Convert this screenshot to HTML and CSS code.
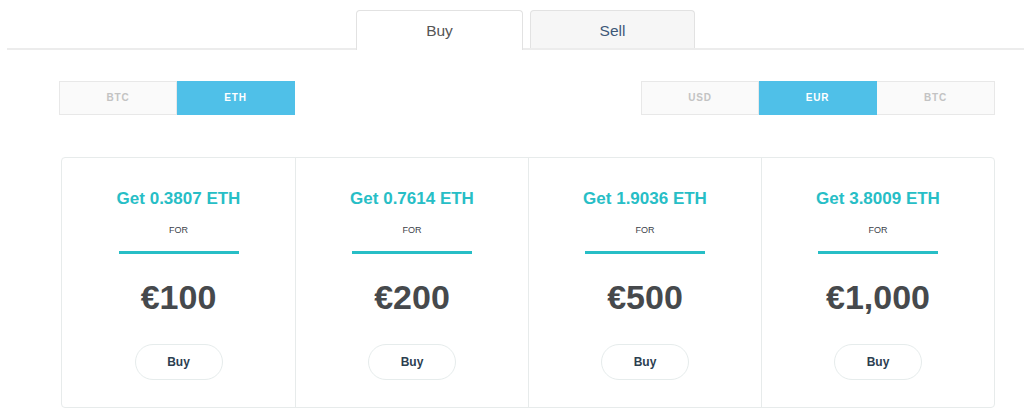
FILE: index.html
```html
<!DOCTYPE html>
<html>
<head>
<meta charset="utf-8">
<link rel="stylesheet" href="styles.css">
</head>
<body>
<div class="tabs">
  <div class="tab tab-active">Buy</div>
  <div class="tab tab-idle">Sell</div>
</div>
<div class="main">
  <div class="toggles">
    <div class="seg-group seg-left">
      <div class="seg">BTC</div>
      <div class="seg seg-on">ETH</div>
    </div>
    <div class="seg-group">
      <div class="seg">USD</div>
      <div class="seg seg-on">EUR</div>
      <div class="seg">BTC</div>
    </div>
  </div>
  <div class="cards">
    <div class="card">
      <div class="get">Get 0.3807 ETH</div>
      <div class="for">FOR</div>
      <div class="rule"></div>
      <div class="price">€100</div>
      <div class="btn">Buy</div>
    </div>
    <div class="card">
      <div class="get">Get 0.7614 ETH</div>
      <div class="for">FOR</div>
      <div class="rule"></div>
      <div class="price">€200</div>
      <div class="btn">Buy</div>
    </div>
    <div class="card">
      <div class="get">Get 1.9036 ETH</div>
      <div class="for">FOR</div>
      <div class="rule"></div>
      <div class="price">€500</div>
      <div class="btn">Buy</div>
    </div>
    <div class="card">
      <div class="get">Get 3.8009 ETH</div>
      <div class="for">FOR</div>
      <div class="rule"></div>
      <div class="price">€1,000</div>
      <div class="btn">Buy</div>
    </div>
  </div>
</div>
</body>
</html>
```

FILE: styles.css
```css
html, body {
  margin: 0;
  padding: 0;
  background: #ffffff;
  font-family: "Liberation Sans", Arial, sans-serif;
}

.tabs {
  display: flex;
  margin-left: 7px;
  padding-top: 10px;
  padding-left: 349px;
  gap: 7px;
  border-bottom: 2px solid #ececec;
  height: 38px;
}

.tab {
  box-sizing: border-box;
  height: 38px;
  line-height: 36px;
  padding-top: 2px;
  text-align: center;
  font-size: 15.5px;
  border: 1px solid #e2e2e2;
  border-bottom: none;
  border-radius: 4px 4px 0 0;
}

.tab-active {
  width: 167px;
  background: #ffffff;
  color: #555555;
  height: 40px;
  margin-bottom: -2px;
}

.tab-idle {
  width: 165px;
  background: #f6f6f6;
  color: #3e5878;
}

.main {
  padding: 31px 29px 0 59px;
}

.toggles {
  display: flex;
  justify-content: space-between;
}

.seg-group {
  display: flex;
}

.seg {
  box-sizing: border-box;
  width: 118px;
  height: 34px;
  line-height: 32px;
  text-align: center;
  font-size: 10px;
  font-weight: bold;
  letter-spacing: 0.8px;
  color: #c3c3c3;
  background: #fafafa;
  border: 1px solid #e8e8e8;
}

.seg + .seg {
  border-left: none;
}

.seg-on {
  background: #4fc0e8;
  border-color: #4fc0e8;
  color: #ffffff;
}

.cards {
  margin: 42px 0 0 2px;
  display: grid;
  grid-template-columns: repeat(4, 1fr);
  border: 1px solid #e7ebeb;
  border-radius: 4px;
}

.card {
  display: flex;
  flex-direction: column;
  align-items: center;
  padding: 31px 0 27px;
}

.card + .card {
  border-left: 1px solid #e7ebeb;
}

.get {
  font-size: 17px;
  line-height: 20px;
  font-weight: bold;
  color: #27bec6;
}

.for {
  margin-top: 15px;
  font-size: 9px;
  line-height: 12px;
  color: #3b3f4a;
}

.rule {
  margin-top: 15px;
  width: 120px;
  height: 3px;
  background: #27bec6;
}

.price {
  margin-top: 23px;
  font-size: 34px;
  line-height: 40px;
  font-weight: bold;
  color: #46494c;
}

.btn {
  margin-top: 27px;
  box-sizing: border-box;
  width: 88px;
  height: 36px;
  line-height: 34px;
  text-align: center;
  border: 1px solid #e6ecec;
  border-radius: 18px;
  font-size: 12px;
  font-weight: bold;
  color: #2c3e50;
}
```
